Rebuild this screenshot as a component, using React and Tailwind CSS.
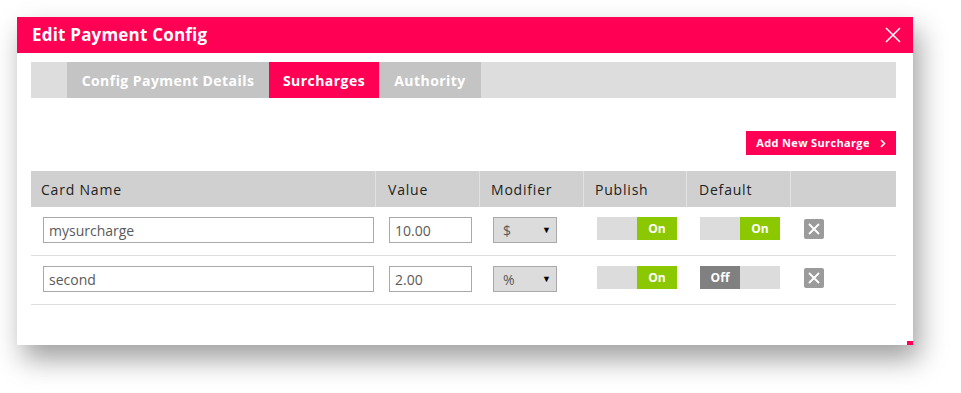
import React from "react";

const COLS = "grid grid-cols-[345px_104px_104px_103px_104px_105px]";

const ROWS = [
  { name: "mysurcharge", value: "10.00", mod: "$", publish: true, def: true },
  { name: "second", value: "2.00", mod: "%", publish: true, def: false },
];

function Toggle({ on }) {
  return (
    <div className="flex w-[80px] h-[23px] bg-[#dcdcdc] text-[12px] font-bold text-white">
      {on ? (
        <>
          <div className="w-[40px]" />
          <div className="w-[40px] bg-[#8cc800] flex items-center justify-center">On</div>
        </>
      ) : (
        <>
          <div className="w-[40px] bg-[#808080] flex items-center justify-center">Off</div>
          <div className="w-[40px]" />
        </>
      )}
    </div>
  );
}

function Row({ row }) {
  return (
    <div className={`${COLS} h-[49px] border-b border-[#dedede] pt-[10px] items-start`}>
      <div className="pl-[12px]">
        <div className="w-[331px] h-[26px] border border-[#a9a9a9] px-[5px] flex items-center text-[14px] text-[#5a5a5a]">
          {row.name}
        </div>
      </div>
      <div className="pl-[13px]">
        <div className="w-[83px] h-[26px] border border-[#a9a9a9] px-[5px] flex items-center text-[14px] text-[#5a5a5a]">
          {row.value}
        </div>
      </div>
      <div className="pl-[13px]">
        <div className="w-[64px] h-[26px] border border-[#a9a9a9] bg-[#dcdcdc] pl-[9px] pr-[5px] flex items-center justify-between text-[14px] text-[#5a5a5a]">
          <span>{row.mod}</span>
          <span className="text-[9px] text-black">▼</span>
        </div>
      </div>
      <div className="pl-[13px]">
        <Toggle on={row.publish} />
      </div>
      <div className="pl-[13px]">
        <Toggle on={row.def} />
      </div>
      <div className="pl-[13px] pt-[2px]">
        <div className="w-[20px] h-[20px] bg-[#9b9b9b] rounded-[2px] flex items-center justify-center">
          <svg width="12" height="12" viewBox="0 0 12 12">
            <path d="M1 1L11 11M11 1L1 11" stroke="#fff" strokeWidth="1.8" />
          </svg>
        </div>
      </div>
    </div>
  );
}

export default function App() {
  return (
    <div className="w-[961px] h-[393px] bg-white pl-[17px] pt-[17px] font-['Open_Sans','Liberation_Sans',sans-serif] overflow-hidden">
      <div className="relative w-[896px] h-[328px] bg-white shadow-[6px_14px_26px_rgba(0,0,0,0.38)]">
        {/* header */}
        <div className="h-[36px] bg-[#ff0055] flex items-center justify-between pl-[15px] pr-[12px]">
          <h1 className="text-white text-[17px] font-bold tracking-[0.2px]">Edit Payment Config</h1>
          <svg width="16" height="16" viewBox="0 0 16 16">
            <path d="M1 1L15 15M15 1L1 15" stroke="#fff" strokeWidth="1.5" />
          </svg>
        </div>

        <div className="pl-[14px] pr-[17px] pt-[9px]">
          {/* tabs */}
          <div className="h-[36px] bg-[#dddddd] flex text-[14px] font-bold text-white tracking-[0.45px]">
            <div className="w-[36px]" />
            <div className="w-[202px] bg-[#c4c4c4] flex items-center justify-center">Config Payment Details</div>
            <div className="w-[110px] bg-[#ff0055] flex items-center justify-center">Surcharges</div>
            <div className="w-[102px] bg-[#c4c4c4] flex items-center justify-center">Authority</div>
          </div>

          {/* action */}
          <div className="flex justify-end mt-[33px]">
            <button className="h-[24px] w-[150px] bg-[#ff0055] text-white text-[11px] font-bold tracking-[0.35px] flex items-center justify-center gap-[10px]">
              Add New Surcharge
              <svg width="6" height="9" viewBox="0 0 6 9">
                <path d="M1 1L4.5 4.5L1 8" stroke="#fff" strokeWidth="1.6" fill="none" />
              </svg>
            </button>
          </div>

          {/* table */}
          <div className="mt-[16px]">
            <div className={`${COLS} h-[36px] bg-[#d0d0d0] text-[14px] font-medium text-[#222] tracking-[0.8px]`}>
              <div className="pl-[10px] flex items-center border-r border-[#e2e2e2]">Card Name</div>
              <div className="pl-[12px] flex items-center border-r border-[#e2e2e2]">Value</div>
              <div className="pl-[11px] flex items-center border-r border-[#e2e2e2]">Modifier</div>
              <div className="pl-[11px] flex items-center border-r border-[#e2e2e2]">Publish</div>
              <div className="pl-[12px] flex items-center border-r border-[#e2e2e2]">Default</div>
              <div />
            </div>
            {ROWS.map((r) => (
              <Row key={r.name} row={r} />
            ))}
          </div>
        </div>

        <div className="absolute right-0 bottom-0 w-[6px] h-[4px] bg-[#ff0055]" />
      </div>
    </div>
  );
}
